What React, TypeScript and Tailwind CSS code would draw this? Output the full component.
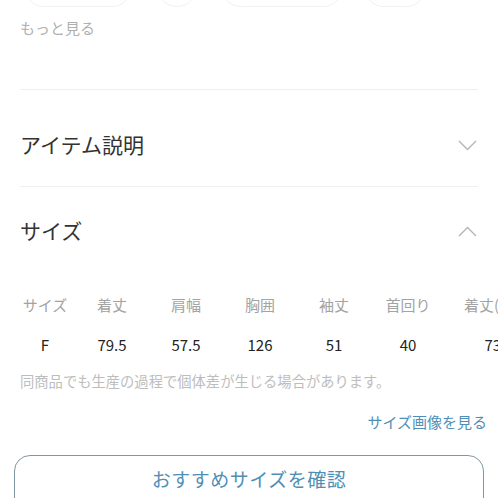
import React from "react";

const font = { fontFamily: '"Noto Sans CJK JP", "Noto Sans", sans-serif' };

function Chevron({ up }: { up?: boolean }) {
  return (
    <svg width="19" height="11" viewBox="0 0 19 11" fill="none" className="mr-[1px]">
      {up ? (
        <path d="M1 10 L9.5 1.5 L18 10" stroke="#b5b5b5" strokeWidth="1.4" />
      ) : (
        <path d="M1 1 L9.5 9.5 L18 1" stroke="#b5b5b5" strokeWidth="1.4" />
      )}
    </svg>
  );
}

export default function App() {
  const heads = ["サイズ", "着丈", "肩幅", "胸囲", "袖丈", "首回り", "着丈(後ろ)"];
  const vals = ["F", "79.5", "57.5", "126", "51", "40", "73.5"];
  const widths = ["w-[60px]", "w-[74px]", "w-[74px]", "w-[74px]", "w-[74px]", "w-[74px]", "w-[108px]"];
  return (
    <div className="w-[498px] h-[498px] overflow-hidden bg-white" style={font}>
      <div className="flex h-[7px] overflow-hidden relative">
        <div className="absolute left-[25px] top-[-30px] w-[106px] h-[37px] rounded-full border border-[#f0f0f0]" />
        <div className="absolute left-[158px] top-[-30px] w-[38px] h-[37px] rounded-full border border-[#f0f0f0]" />
        <div className="absolute left-[222px] top-[-30px] w-[120px] h-[37px] rounded-full border border-[#f0f0f0]" />
        <div className="absolute left-[365px] top-[-30px] w-[60px] h-[37px] rounded-full border border-[#f0f0f0]" />
      </div>
      <div className="px-[20px]">
        <div className="mt-[10px] text-[15px] leading-[22px] text-[#b0b0b0]">もっと見る</div>
        <div className="mt-[50px] h-px bg-[#efefef]" />
        <div className="flex items-center justify-between h-[96px] pt-[14px]">
          <span className="text-[21px] text-[#333]">アイテム説明</span>
          <Chevron />
        </div>
        <div className="h-px bg-[#efefef]" />
        <div className="flex items-center justify-between h-[88px]">
          <span className="text-[21px] text-[#333]">サイズ</span>
          <Chevron up />
        </div>
      </div>
      <div className="flex pl-[15px] mt-[19px] text-[15px] leading-[22px] text-[#a3a3a3]">
        {heads.map((h, i) => (
          <div key={i} className={`${widths[i]} shrink-0 text-center whitespace-nowrap`}>{h}</div>
        ))}
      </div>
      <div className="flex pl-[15px] mt-[18px] text-[15px] leading-[22px] text-[#222]">
        {vals.map((v, i) => (
          <div key={i} className={`${widths[i]} shrink-0 text-center whitespace-nowrap`}>{v}</div>
        ))}
      </div>
      <div className="px-[20px] mt-[15px] text-[14.3px] leading-[20px] text-[#bdbdbd] whitespace-nowrap">
        同商品でも生産の過程で個体差が生じる場合があります。
      </div>
      <div className="px-[11px] mt-[20px] text-right text-[15px] leading-[22px] text-[#4f8fb6]">
        サイズ画像を見る
      </div>
      <div className="mx-[14px] mt-[22px] h-[60px] rounded-[16px] border-[1.5px] border-[#7f98a4] flex justify-center pt-[10px]">
        <span className="text-[19px] leading-[26px] tracking-[0.5px] text-[#4f8fb6]">おすすめサイズを確認</span>
      </div>
    </div>
  );
}
